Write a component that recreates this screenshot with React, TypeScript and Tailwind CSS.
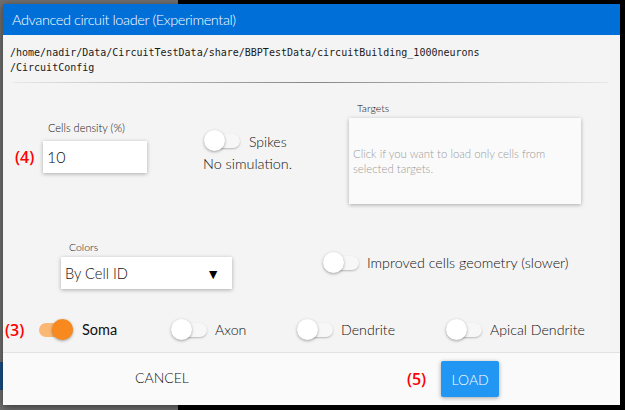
import React from "react";

const SANS = "font-['Lato','Open_Sans',sans-serif]";

function Toggle({ on = false }: { on?: boolean }) {
  return (
    <div className="relative w-[36px] h-[22px] shrink-0">
      <div
        className={
          "absolute left-[2px] right-0 top-[4px] h-[14px] rounded-full " +
          (on ? "bg-[#fbb774]" : "bg-[#f7f7f7] shadow-[0_1px_2px_rgba(0,0,0,0.25)]")
        }
      />
      <div
        className={
          "absolute top-0 w-[21px] h-[21px] rounded-full shadow-[0_1px_3px_rgba(0,0,0,0.35)] " +
          (on ? "right-0 bg-[#f7891f]" : "left-0 bg-white")
        }
      />
    </div>
  );
}

export default function App() {
  return (
    <div className="relative w-[625px] h-[410px] overflow-hidden bg-[linear-gradient(to_right,#707070_178px,#000_178px)] pt-[4px] pl-[3px]">
      <div className="absolute left-0 top-[362px] w-[3px] h-[28px] bg-[#1a4f86]" />
      <div className={"relative w-[617px] h-[401px] flex flex-col shadow-[0_2px_8px_rgba(0,0,0,0.5)] font-light " + SANS}>
        {/* header */}
        <div className="h-[31px] bg-[#0070d8] px-[9px] flex items-center text-white text-[14.5px] tracking-[-0.4px]">
          Advanced circuit loader (Experimental)
        </div>
        {/* body */}
        <div className="flex-1 bg-[#f4f4f4] flex flex-col">
          <div className="pt-[10px] pl-[7px] font-['DejaVu_Sans_Mono',monospace] font-normal text-[10px] leading-[15px] text-[#1a1a1a]">
            <div>/home/nadir/Data/CircuitTestData/share/BBPTestData/circuitBuilding_1000neurons</div>
            <div>/CircuitConfig</div>
          </div>
          <div className="mt-[7px] ml-[10px] mr-[12px] h-px bg-[linear-gradient(to_right,rgba(0,0,0,0.05),rgba(0,0,0,0.45)_50%,rgba(0,0,0,0.05))]" />

          {/* row 1 */}
          <div className="h-[127px] flex items-start pl-[12px]">
            <div className="w-[188px] mt-[39px]">
              <div className="pl-[33px] text-[11px] leading-[12px] text-[#111]">Cells density (%)</div>
              <div className="mt-[7px] flex items-center">
                <span className="w-[28px] font-['Open_Sans',sans-serif] font-semibold text-[16px] text-[#ff0000]">(4)</span>
                <div className="w-[104px] h-[32px] bg-white shadow-[0_1px_4px_rgba(0,0,0,0.3)] flex items-center pl-[4px] text-[16px] text-[#111]">
                  10
                </div>
              </div>
            </div>
            <div className="w-[146px] mt-[47px]">
              <div className="flex items-center pl-[1px] gap-[9px]">
                <Toggle />
                <span className="text-[14px] text-[#111]">Spikes</span>
              </div>
              <div className="mt-[3px] text-[14.4px] leading-[18px] text-[#111]">No simulation.</div>
            </div>
            <div className="mt-[19px]">
              <div className="pl-[8px] text-[10.5px] leading-[12px] text-[#111]">Targets</div>
              <div className="mt-[4px] w-[232px] h-[86px] bg-[#fafafa] shadow-[0_1px_4px_rgba(0,0,0,0.3)] pt-[28px] pl-[4px] pr-[8px] text-[11.4px] leading-[15px] text-[#9a9a9a]">
                Click if you want to load only cells from selected targets.
              </div>
            </div>
          </div>

          {/* row 2 */}
          <div className="h-[109px] flex items-start pl-[58px]">
            <div className="w-[262px] mt-[31px]">
              <div className="pl-[8px] text-[10.5px] leading-[12px] text-[#111]">Colors</div>
              <div className="mt-[4px] w-[171px] h-[32px] bg-white shadow-[0_1px_4px_rgba(0,0,0,0.3)] flex items-center justify-between pl-[4px] pr-[12px] text-[14.7px] text-[#111]">
                <span>By Cell ID</span>
                <span className="text-[14px] text-black font-normal">▼</span>
              </div>
            </div>
            <div className="mt-[42px] flex items-center gap-[8px]">
              <Toggle />
              <span className="text-[14.3px] text-[#111]">Improved cells geometry (slower)</span>
            </div>
          </div>

          {/* row 3 */}
          <div className="h-[22px] flex items-center pl-[2px] text-[14.2px] text-[#111]">
            <span className="w-[32px] font-['Open_Sans',sans-serif] font-semibold text-[16px] text-[#ff0000]">(3)</span>
            <div className="w-[134px] flex items-center gap-[9px]">
              <Toggle on />
              <span className="font-normal text-[14.5px]">Soma</span>
            </div>
            <div className="w-[126px] flex items-center gap-[8px]">
              <Toggle />
              <span>Axon</span>
            </div>
            <div className="w-[149px] flex items-center gap-[8px]">
              <Toggle />
              <span>Dendrite</span>
            </div>
            <div className="flex items-center gap-[8px]">
              <Toggle />
              <span>Apical Dendrite</span>
            </div>
          </div>
        </div>
        {/* footer */}
        <div className="h-[53px] border-t border-[#e2e2e2] bg-[#fafafa] flex items-center pl-[132px]">
          <span className="text-[14px] text-[#111] mt-[-4px]">CANCEL</span>
          <span className="ml-[218px] font-['Open_Sans',sans-serif] font-semibold text-[16px] text-[#ff0000]">(5)</span>
          <div className="ml-[15px] w-[58px] h-[36px] rounded-[2px] bg-[#2196f3] shadow-[0_1px_4px_rgba(0,0,0,0.35)] flex items-center justify-center text-white text-[14px]">
            LOAD
          </div>
        </div>
      </div>
    </div>
  );
}
